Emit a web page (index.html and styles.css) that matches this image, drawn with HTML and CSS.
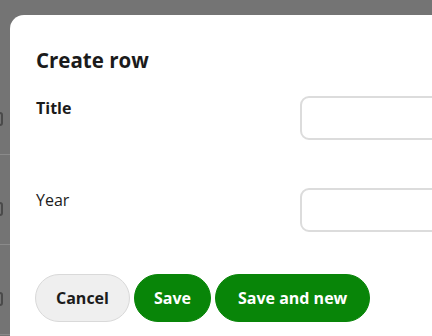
FILE: index.html
```html
<!DOCTYPE html>
<html lang="en">
<head>
    <meta charset="UTF-8">
    <meta name="viewport" content="width=device-width, initial-scale=1.0">
    <title>Create row</title>
    <link rel="stylesheet" href="styles.css">
</head>
<body>
    <div class="table-behind">
        <div class="table-row"><span class="row-check"></span></div>
        <div class="table-row"><span class="row-check"></span></div>
        <div class="table-row"><span class="row-check"></span></div>
    </div>

    <div class="dialog">
        <h1>Create row</h1>
        <form id="rowForm">
            <div class="field">
                <label for="title" class="required">Title</label>
                <input type="text" id="title" name="title">
            </div>
            <div class="field">
                <label for="year">Year</label>
                <input type="text" id="year" name="year">
            </div>
            <div class="actions">
                <button type="button" class="btn btn-cancel">Cancel</button>
                <button type="submit" class="btn btn-primary">Save</button>
                <button type="submit" class="btn btn-primary btn-wide">Save and new</button>
            </div>
        </form>
    </div>
</body>
</html>
```

FILE: styles.css
```css
* {
    box-sizing: border-box;
}
html,
body {
    overflow: hidden;
}
body {
    font-family: 'Open Sans', 'Noto Sans', Arial, sans-serif;
    background-color: #747474;
    margin: 0;
    height: 336px;
    color: #1b1b1b;
}
.table-behind {
    padding-top: 65px;
}
.table-row {
    height: 90px;
    border-bottom: 1px solid #8a8a8a;
    padding-top: 47px;
}
.row-check {
    display: block;
    width: 16px;
    height: 14px;
    margin-left: -13px;
    border: 2px solid #4a4a4a;
    border-radius: 3px;
}
.dialog {
    position: absolute;
    top: 15px;
    left: 10px;
    width: 422px;
    height: 321px;
    background-color: #fff;
    border-top-left-radius: 14px;
    padding: 31px 0 0 26px;
    overflow: hidden;
}
.dialog h1 {
    font-size: 20.5px;
    font-weight: 700;
    line-height: 28px;
    margin: 0 0 22px;
}
.field {
    display: grid;
    grid-template-columns: 264px 200px;
    margin-bottom: 48px;
}
.field label {
    font-size: 16px;
    line-height: 24px;
}
.field label.required {
    font-weight: 700;
}
.field input {
    height: 44px;
    border: 2px solid #dcdcdc;
    border-radius: 9px;
    font: inherit;
    padding: 0 12px;
}
.actions {
    display: flex;
    gap: 4px;
    margin-top: -6px;
    margin-left: -1px;
}
.btn {
    font-family: inherit;
    font-size: 16px;
    font-weight: 700;
    height: 48px;
    padding: 0 20px;
    border-radius: 24px;
    cursor: pointer;
}
.btn-primary {
    padding: 0 19px;
}
.btn-wide {
    padding: 0 22px;
}
.btn-cancel {
    background-color: #efefef;
    border: 1px solid #d9d9d9;
    color: #1b1b1b;
}
.btn-primary {
    background-color: #088508;
    border: 1px solid #088508;
    color: #fff;
}
```
